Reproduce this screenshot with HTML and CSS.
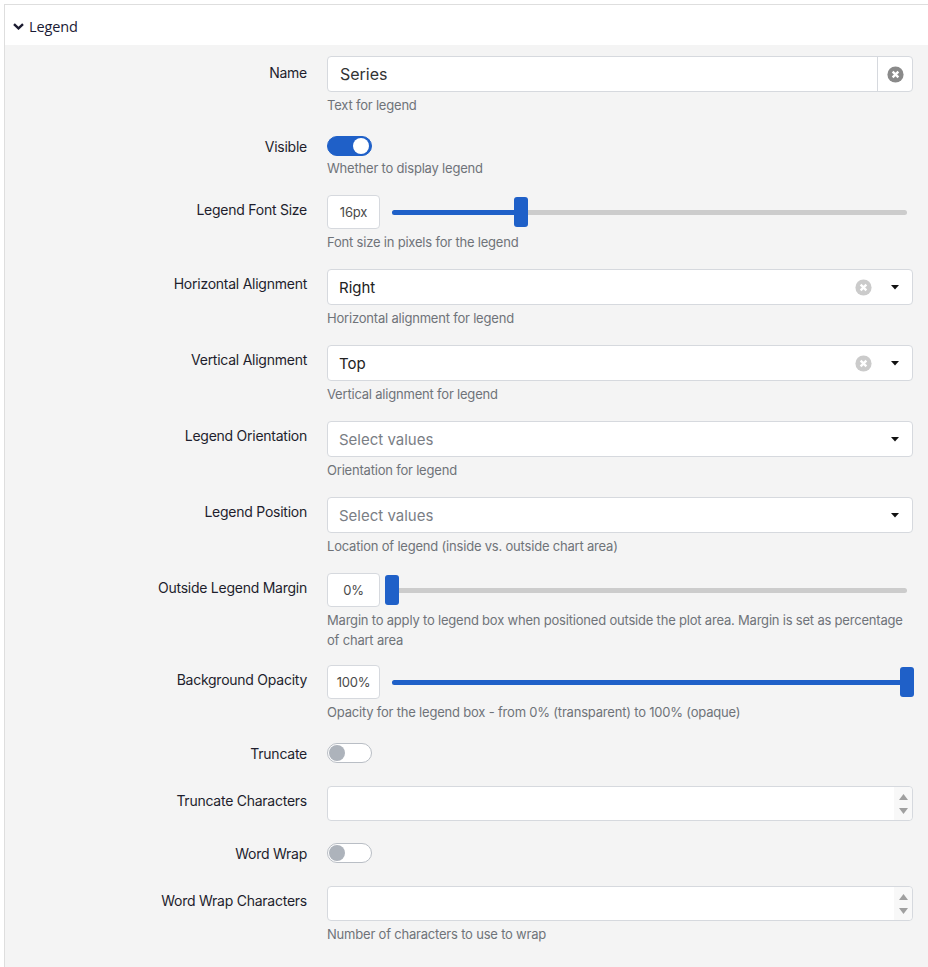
FILE: index.html
```html
<!DOCTYPE html>
<html lang="en">
<head>
    <meta charset="UTF-8">
    <meta name="viewport" content="width=device-width, initial-scale=1.0">
    <title>Legend Settings</title>
    <link rel="stylesheet" href="styles.css">
</head>
<body>
    <div class="panel">
        <div class="panel-header">
            <svg class="chevron" width="11" height="7" viewBox="0 0 11 7"><path d="M1 1.2 L5.5 5.4 L10 1.2" fill="none" stroke="#1b1b30" stroke-width="2.4"/></svg>
            <span>Legend</span>
        </div>
        <div class="panel-body">
            <!-- Name -->
            <div class="row">
                <div class="label label-name">Name</div>
                <div class="control">
                    <div class="input-group">
                        <input class="text-input" type="text" value="Series">
                        <span class="clear-btn">
                            <svg width="17" height="17" viewBox="0 0 16 16"><circle cx="8" cy="8" r="7.6" fill="#8a8a8a"/><path d="M5.3 5.3 L10.7 10.7 M10.7 5.3 L5.3 10.7" stroke="#fff" stroke-width="2.2"/></svg>
                        </span>
                    </div>
                    <div class="help">Text for legend</div>
                </div>
            </div>

            <!-- Visible -->
            <div class="row row-toggle">
                <div class="label">Visible</div>
                <div class="control">
                    <span class="toggle on"><span class="knob"></span></span>
                    <div class="help">Whether to display legend</div>
                </div>
            </div>

            <!-- Legend Font Size -->
            <div class="row">
                <div class="label">Legend Font Size</div>
                <div class="control">
                    <div class="slider">
                        <span class="slider-box">16px</span>
                        <div class="track">
                            <div class="fill" style="width: 25%"></div>
                            <span class="handle" style="left: 25%"></span>
                        </div>
                    </div>
                    <div class="help">Font size in pixels for the legend</div>
                </div>
            </div>

            <!-- Horizontal Alignment -->
            <div class="row">
                <div class="label">Horizontal Alignment</div>
                <div class="control">
                    <div class="select">
                        <span class="select-value">Right</span>
                        <svg class="select-clear" width="17" height="17" viewBox="0 0 16 16"><circle cx="8" cy="8" r="7.6" fill="#cbcbcb"/><path d="M5.3 5.3 L10.7 10.7 M10.7 5.3 L5.3 10.7" stroke="#fff" stroke-width="2.2"/></svg>
                        <svg class="caret" width="8" height="5" viewBox="0 0 8 5"><path d="M0 0 H8 L4 4.5 Z" fill="#111"/></svg>
                    </div>
                    <div class="help">Horizontal alignment for legend</div>
                </div>
            </div>

            <!-- Vertical Alignment -->
            <div class="row">
                <div class="label">Vertical Alignment</div>
                <div class="control">
                    <div class="select">
                        <span class="select-value">Top</span>
                        <svg class="select-clear" width="17" height="17" viewBox="0 0 16 16"><circle cx="8" cy="8" r="7.6" fill="#cbcbcb"/><path d="M5.3 5.3 L10.7 10.7 M10.7 5.3 L5.3 10.7" stroke="#fff" stroke-width="2.2"/></svg>
                        <svg class="caret" width="8" height="5" viewBox="0 0 8 5"><path d="M0 0 H8 L4 4.5 Z" fill="#111"/></svg>
                    </div>
                    <div class="help">Vertical alignment for legend</div>
                </div>
            </div>

            <!-- Legend Orientation -->
            <div class="row">
                <div class="label">Legend Orientation</div>
                <div class="control">
                    <div class="select">
                        <span class="select-value placeholder">Select values</span>
                        <svg class="caret" width="8" height="5" viewBox="0 0 8 5"><path d="M0 0 H8 L4 4.5 Z" fill="#111"/></svg>
                    </div>
                    <div class="help">Orientation for legend</div>
                </div>
            </div>

            <!-- Legend Position -->
            <div class="row">
                <div class="label">Legend Position</div>
                <div class="control">
                    <div class="select">
                        <span class="select-value placeholder">Select values</span>
                        <svg class="caret" width="8" height="5" viewBox="0 0 8 5"><path d="M0 0 H8 L4 4.5 Z" fill="#111"/></svg>
                    </div>
                    <div class="help">Location of legend (inside vs. outside chart area)</div>
                </div>
            </div>

            <!-- Outside Legend Margin -->
            <div class="row row-tight">
                <div class="label">Outside Legend Margin</div>
                <div class="control">
                    <div class="slider">
                        <span class="slider-box">0%</span>
                        <div class="track">
                            <div class="fill" style="width: 0%"></div>
                            <span class="handle" style="left: 0%"></span>
                        </div>
                    </div>
                    <div class="help">Margin to apply to legend box when positioned outside the plot area. Margin is set as percentage of chart area</div>
                </div>
            </div>

            <!-- Background Opacity -->
            <div class="row">
                <div class="label">Background Opacity</div>
                <div class="control">
                    <div class="slider">
                        <span class="slider-box">100%</span>
                        <div class="track">
                            <div class="fill" style="width: 100%"></div>
                            <span class="handle" style="left: 100%"></span>
                        </div>
                    </div>
                    <div class="help">Opacity for the legend box - from 0% (transparent) to 100% (opaque)</div>
                </div>
            </div>

            <!-- Truncate -->
            <div class="row row-toggle no-help">
                <div class="label">Truncate</div>
                <div class="control">
                    <span class="toggle"><span class="knob"></span></span>
                </div>
            </div>

            <!-- Truncate Characters -->
            <div class="row no-help">
                <div class="label">Truncate Characters</div>
                <div class="control">
                    <div class="number-input">
                        <span class="spinner">
                            <svg width="9" height="6" viewBox="0 0 9 6"><path d="M0 6 L4.5 0 L9 6 Z" fill="#a0a0a0"/></svg>
                            <svg width="9" height="6" viewBox="0 0 9 6"><path d="M0 0 L9 0 L4.5 6 Z" fill="#a0a0a0"/></svg>
                        </span>
                    </div>
                </div>
            </div>

            <!-- Word Wrap -->
            <div class="row row-toggle no-help">
                <div class="label">Word Wrap</div>
                <div class="control">
                    <span class="toggle"><span class="knob"></span></span>
                </div>
            </div>

            <!-- Word Wrap Characters -->
            <div class="row">
                <div class="label">Word Wrap Characters</div>
                <div class="control">
                    <div class="number-input">
                        <span class="spinner">
                            <svg width="9" height="6" viewBox="0 0 9 6"><path d="M0 6 L4.5 0 L9 6 Z" fill="#a0a0a0"/></svg>
                            <svg width="9" height="6" viewBox="0 0 9 6"><path d="M0 0 L9 0 L4.5 6 Z" fill="#a0a0a0"/></svg>
                        </span>
                    </div>
                    <div class="help">Number of characters to use to wrap</div>
                </div>
            </div>
        </div>
    </div>
</body>
</html>
```

FILE: styles.css
```css
* {
    box-sizing: border-box;
}

body {
    margin: 0;
    background-color: #ffffff;
    font-family: Inter, "Noto Sans", sans-serif;
    color: #1e1e2d;
}

.panel {
    margin: 4px 0 0 4px;
    border-top: 1px solid #dedede;
    border-left: 1px solid #dedede;
}

.panel-header {
    height: 40px;
    display: flex;
    align-items: center;
    gap: 5px;
    padding: 3px 0 0 8px;
    background-color: #ffffff;
    font-family: "Open Sans", sans-serif;
    font-size: 14.5px;
    letter-spacing: -0.1px;
    color: #1a1a35;
}

.panel-body {
    background-color: #f4f4f4;
    padding: 11px 15px 20px 0;
    min-height: calc(100vh - 45px);
}

.row {
    display: grid;
    grid-template-columns: 302px 1fr;
    column-gap: 20px;
    margin-bottom: 17px;
}

.row.row-tight {
    margin-bottom: 15px;
}

.row.no-help {
    margin-bottom: 18px;
}

.row.row-toggle.no-help {
    margin-bottom: 22px;
}

.label {
    text-align: right;
    font-size: 14px;
    line-height: 20px;
    letter-spacing: -0.25px;
    padding-top: 5px;
    color: #1e1e2d;
}

.label-name {
    padding-top: 7px;
}

.help {
    margin-top: 3px;
    font-size: 13px;
    line-height: 20px;
    letter-spacing: -0.2px;
    color: #6f7379;
}

.row-toggle .help {
    margin-top: 2px;
}

/* text input with clear button */
.input-group {
    display: flex;
    height: 36px;
    border: 1px solid #d6d9de;
    border-radius: 4px;
    background-color: #ffffff;
}

.text-input {
    flex: 1;
    border: none;
    outline: none;
    background: transparent;
    padding: 0 12px;
    font-family: Inter, "Noto Sans", sans-serif;
    font-size: 16px;
    color: #333333;
}

.clear-btn {
    width: 35px;
    display: flex;
    align-items: center;
    justify-content: center;
    border-left: 1px solid #d6d9de;
}

/* toggle switch */
.toggle {
    display: block;
    position: relative;
    width: 45px;
    height: 20px;
    margin-top: 4px;
    border-radius: 10px;
    border: 1px solid #b9bec5;
    background-color: #ffffff;
}

.toggle .knob {
    position: absolute;
    top: 1px;
    left: 1px;
    width: 16px;
    height: 16px;
    border-radius: 50%;
    background-color: #adb3bb;
}

.toggle.on {
    background-color: #1f60c8;
    border-color: #1f60c8;
}

.toggle.on .knob {
    left: auto;
    right: 2px;
    background-color: #ffffff;
}

/* slider */
.slider {
    display: flex;
    align-items: center;
    height: 34px;
}

.slider-box {
    width: 53px;
    height: 34px;
    display: flex;
    align-items: center;
    justify-content: center;
    border: 1px solid #d6d9de;
    border-radius: 4px;
    background-color: #ffffff;
    font-size: 13px;
    letter-spacing: -0.2px;
    color: #4a4a4a;
}

.track {
    position: relative;
    flex: 1;
    height: 5px;
    margin: 0 6px 0 12px;
    border-radius: 3px;
    background-color: #cccccc;
}

.fill {
    height: 100%;
    border-radius: 3px;
    background-color: #1f60c8;
}

.handle {
    position: absolute;
    top: -13px;
    width: 14px;
    height: 30px;
    margin-left: -7px;
    border-radius: 3px;
    background-color: #1f60c8;
}

/* select */
.select {
    display: flex;
    align-items: center;
    height: 36px;
    padding: 0 13px 0 11px;
    border: 1px solid #d6d9de;
    border-radius: 4px;
    background-color: #ffffff;
}

.select-value {
    flex: 1;
    font-size: 15px;
    color: #222222;
}

.select-value.placeholder {
    color: #7a7e85;
}

.select-clear {
    margin-right: 19px;
}

/* number input */
.number-input {
    display: flex;
    justify-content: flex-end;
    height: 35px;
    border: 1px solid #d6d9de;
    border-radius: 4px;
    background-color: #ffffff;
}

.spinner {
    width: 18px;
    display: flex;
    flex-direction: column;
    align-items: center;
    justify-content: center;
    gap: 8px;
    background-color: #f8f8f8;
    border-radius: 0 4px 4px 0;
}
```
